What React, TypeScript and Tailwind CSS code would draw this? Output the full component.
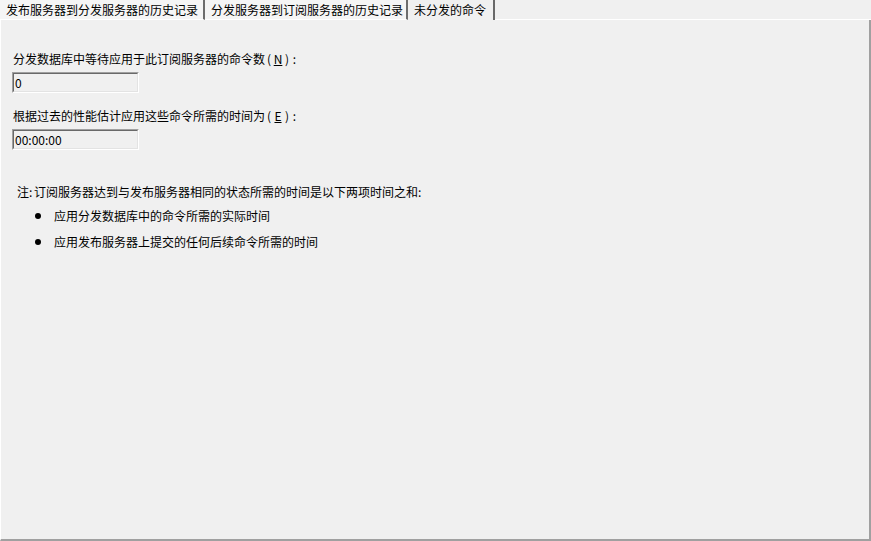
import React from "react";

const FONT = { fontFamily: '"Noto Sans CJK SC", "Liberation Sans", sans-serif' };

function Tab({ label, width, active }: { label: string; width: string; active?: boolean }) {
  return (
    <div
      className={`${width} h-[20px] flex items-center pl-[6px] text-[12px] text-black border-r-2 ${
        active ? "bg-[#f0f0f0] border-r-[#696969]" : "bg-[#f5f5f5] border-r-[#6d6d6d] border-b border-b-white"
      }`}
    >
      {label}
    </div>
  );
}

// access key like "(N):" — wider than plain ascii in the original dialog font
function AccessKey({ k }: { k: string }) {
  return (
    <>
      <span className="inline-block w-[8px] text-center">(</span>
      <span className="inline-block w-[10px] text-center underline">{k}</span>
      <span className="inline-block w-[8px] text-center">)</span>
      <span className="inline-block w-[7px] text-center">:</span>
    </>
  );
}

function ReadonlyBox({ value }: { value: string }) {
  return (
    <div className="w-[127px] h-[21px] border border-t-[#a0a0a0] border-l-[#a0a0a0] border-r-white border-b-white">
      <div className="h-full border border-t-[#696969] border-l-[#696969] border-r-[#e3e3e3] border-b-[#e3e3e3] bg-[#f0f0f0] flex items-center pl-[1px] text-[12px] leading-none text-black">
        {value}
      </div>
    </div>
  );
}

export default function App() {
  return (
    <div className="w-[871px] h-[541px] bg-[#f0f0f0] flex flex-col overflow-hidden" style={FONT}>
      {/* tab strip */}
      <div className="flex h-[20px]">
        <Tab label="发布服务器到分发服务器的历史记录" width="w-[205px]" />
        <Tab label="分发服务器到订阅服务器的历史记录" width="w-[203px]" />
        <Tab label="未分发的命令" width="w-[87px]" active />
        <div className="flex-1 border-b border-b-white" />
      </div>

      {/* page */}
      <div className="flex-1 border-l border-l-white border-r-2 border-r-[#a0a0a0] border-b-2 border-b-[#a0a0a0] px-[11px] pt-[31px] text-[12px] text-black">
        <div className="leading-[16px] pl-[1px]">
          分发数据库中等待应用于此订阅服务器的命令数<AccessKey k="N" />
        </div>
        <div className="mt-[5px]">
          <ReadonlyBox value="0" />
        </div>

        <div className="leading-[16px] mt-[15px] pl-[1px]">
          根据过去的性能估计应用这些命令所需的时间为<AccessKey k="E" />
        </div>
        <div className="mt-[5px]">
          <ReadonlyBox value="00:00:00" />
        </div>

        <div className="leading-[16px] mt-[34px] pl-[5px]">
          注<span className="inline-block w-[5px]">:</span>订阅服务器达到与发布服务器相同的状态所需的时间是以下两项时间之和:
        </div>
        <ul className="mt-[8px] flex flex-col gap-[10px]">
          <li className="flex items-center leading-[16px]">
            <span className="w-[6px] h-[6px] rounded-full bg-black ml-[23px] mr-[13px]" />
            应用分发数据库中的命令所需的实际时间
          </li>
          <li className="flex items-center leading-[16px]">
            <span className="w-[6px] h-[6px] rounded-full bg-black ml-[23px] mr-[13px]" />
            应用发布服务器上提交的任何后续命令所需的时间
          </li>
        </ul>
      </div>
    </div>
  );
}
